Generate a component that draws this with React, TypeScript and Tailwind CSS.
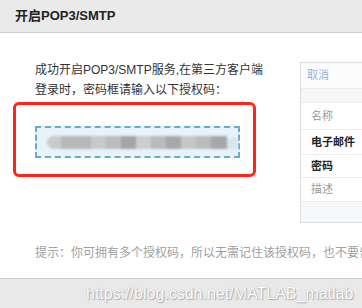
import React from "react";

const blurBlocks = [
  { w: 14, c: "#c8cacd" },
  { w: 30, c: "#b5b8bb" },
  { w: 15, c: "#c6c9cc" },
  { w: 15, c: "#babdc0" },
  { w: 15, c: "#a3a6a9" },
  { w: 15, c: "#cbced1" },
  { w: 15, c: "#b8bbbe" },
  { w: 15, c: "#a6a9ac" },
  { w: 15, c: "#c4c7ca" },
  { w: 15, c: "#b9bcbf" },
  { w: 16, c: "#a4a8ac" },
];

export default function App() {
  const font = { fontFamily: '"Liberation Sans", "Noto Sans CJK SC", sans-serif' };
  return (
    <div className="relative w-[362px] h-[308px] overflow-hidden bg-white" style={font}>
      <div className="h-[33px] bg-[#eaeaea] border-b border-[#cfcfcf] flex items-center pl-[15px]">
        <span className="text-[13px] font-bold text-[#222]">开启POP3/SMTP</span>
      </div>

      <div className="h-[245px] flex flex-col">
        <div className="flex">
          <div className="w-[265px] pl-[35px] pt-[27px] shrink-0">
            <p className="text-[12px] leading-[20px] text-[#333]">成功开启POP3/SMTP服务,在第三方客户端</p>
            <p className="text-[12px] leading-[20px] text-[#333]">登录时，密码框请输入以下授权码：</p>
            <div className="mt-[26px] w-[205px] h-[32px] border-2 border-dashed border-[#5eaed6] bg-[#e9f2f9] flex items-center pl-[10px]">
              <div className="flex h-[13px] blur-[1px]">
                {blurBlocks.map((b, i) => (
                  <div
                    key={i}
                    className={i === 0 ? "h-full rounded-l-full" : "h-full"}
                    style={{ width: b.w, background: b.c }}
                  />
                ))}
                <div className="h-[11px] mt-[2px] w-[11px] bg-[#d6e5f0]" />
              </div>
            </div>
          </div>

          <div className="ml-[35px] mt-[29px] w-[100px] shrink-0 border border-[#dcdcdc] text-[11px]">
            <div className="h-[26px] flex items-center pl-[6px] text-[#8db4df] border-b border-[#ececec] bg-[#fcfcfd]">取消</div>
            <div className="h-[14px] bg-[#f5f6f7] border-b border-[#ececec]" />
            <div className="h-[27px] flex items-center pl-[10px] text-[#9a9a9a] border-b border-[#ececec]">名称</div>
            <div className="h-[25px] flex items-center pl-[10px] text-[#222] font-bold border-b border-[#ececec]">电子邮件</div>
            <div className="h-[23px] flex items-center pl-[10px] text-[#222] font-bold border-b border-[#ececec]">密码</div>
            <div className="h-[24px] flex items-center pl-[10px] text-[#9a9a9a] border-b border-[#ececec]">描述</div>
            <div className="h-[20px] bg-[#f7f8fa]" />
          </div>
        </div>

        <p className="mt-[22px] pl-[35px] text-[12px] leading-[16px] text-[#a0a0a0] whitespace-nowrap">
          提示：你可拥有多个授权码，所以无需记住该授权码，也不要告诉别人
        </p>
      </div>

      <div className="h-[30px] bg-[#e9e9e9] border-t border-[#cacaca] flex items-center pl-[86px]">
        <span
          className="text-[16px] text-white whitespace-nowrap"
          style={{ fontFamily: '"Liberation Sans", Arial, sans-serif', textShadow: "0 0 1px #9a9a9a, 1px 1px 1px #b0b0b0" }}
        >
          https://blog.csdn.net/MATLAB_matlab
        </span>
      </div>

      <div className="absolute left-[13px] top-[102px] w-[243px] h-[75px] border-[3px] border-[#ff2418] rounded-[6px]" />
    </div>
  );
}
